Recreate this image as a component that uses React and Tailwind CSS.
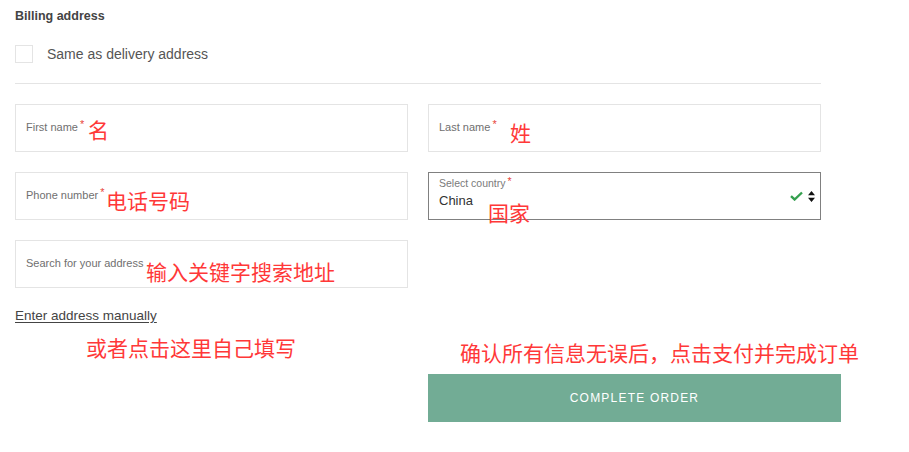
import React from 'react';

const Field = ({ label, required = true, className = '' }) => (
  <div className={`h-[48px] border border-[#e4e4e4] bg-white pl-[10px] pt-[14px] leading-[14px] ${className}`}>
    <span className="text-[11px] leading-[14px] text-[#6f6f6f]">{label}</span>
    {required && <span className="relative -top-[3px] ml-[2px] text-[11px] text-[#e8453c]">*</span>}
  </div>
);

const Note = ({ children, className }) => (
  <span
    className={`absolute text-[21px] leading-[21px] text-[#ff3838] whitespace-nowrap ${className}`}
    style={{ fontFamily: '"Noto Sans CJK SC", sans-serif' }}
  >
    {children}
  </span>
);

const App = () => {
  return (
    <div
      className="relative min-h-[452px] w-[909px] bg-white px-[15px] pt-[8px] text-[#333]"
      style={{ fontFamily: '"Liberation Sans", Arial, sans-serif' }}
    >
      <h2 className="text-[12.5px] font-semibold leading-[16px] text-[#444]">Billing address</h2>

      <label className="mt-[21px] flex items-center gap-[14px]">
        <span className="h-[18px] w-[18px] border border-[#e4e4e4] bg-white"></span>
        <span className="text-[14px] leading-[18px] text-[#555]">Same as delivery address</span>
      </label>

      <div className="mt-[20px] h-px w-[806px] bg-[#e4e4e4]"></div>

      <div className="mt-[20px] grid w-[806px] grid-cols-2 gap-x-[20px] gap-y-[20px]">
        <Field label="First name" />
        <Field label="Last name" />
        <Field label="Phone number" />
        <div className="flex h-[48px] items-center border border-[#808080] bg-white pl-[10px] pr-[5px]">
          <div className="flex-1 self-start">
            <div className="mt-[3px] text-[10.5px] leading-[14px] text-[#7a7a7a]">
              Select country<span className="relative -top-[2px] ml-[2px] text-[#e8453c]">*</span>
            </div>
            <div className="mt-[3px] text-[13px] leading-[16px] text-[#333]">China</div>
          </div>
          <svg width="13" height="10" viewBox="0 0 13 10" className="mr-[5px]">
            <path d="M1 5.2 L4.6 8.5 L12 1.5" fill="none" stroke="#35a04f" strokeWidth="2.4" />
          </svg>
          <svg width="7" height="11" viewBox="0 0 7 11">
            <path d="M3.5 0 L7 4.3 H0 Z M3.5 11 L7 6.7 H0 Z" fill="#111" />
          </svg>
        </div>
        <Field label="Search for your address" required={false} />
      </div>

      <a className="mt-[18px] block w-fit text-[13.5px] leading-[20px] text-[#444] underline underline-offset-[2px]">
        Enter address manually
      </a>

      <div className="mt-[48px] flex w-[826px]">
        <div className="w-[413px]"></div>
        <button className="h-[48px] w-[413px] bg-[#72ac95] text-[12px] font-medium tracking-[1.2px] text-white">
          COMPLETE ORDER
        </button>
      </div>

      <Note className="left-[88px] top-[119px]">名</Note>
      <Note className="left-[510px] top-[122px]">姓</Note>
      <Note className="left-[106px] top-[190px]">电话号码</Note>
      <Note className="left-[488px] top-[202px]">国家</Note>
      <Note className="left-[146px] top-[261px]">输入关键字搜索地址</Note>
      <Note className="left-[86px] top-[337px]">或者点击这里自己填写</Note>
      <Note className="left-[460px] top-[342px]">确认所有信息无误后，点击支付并完成订单</Note>
    </div>
  );
};

export default App;
